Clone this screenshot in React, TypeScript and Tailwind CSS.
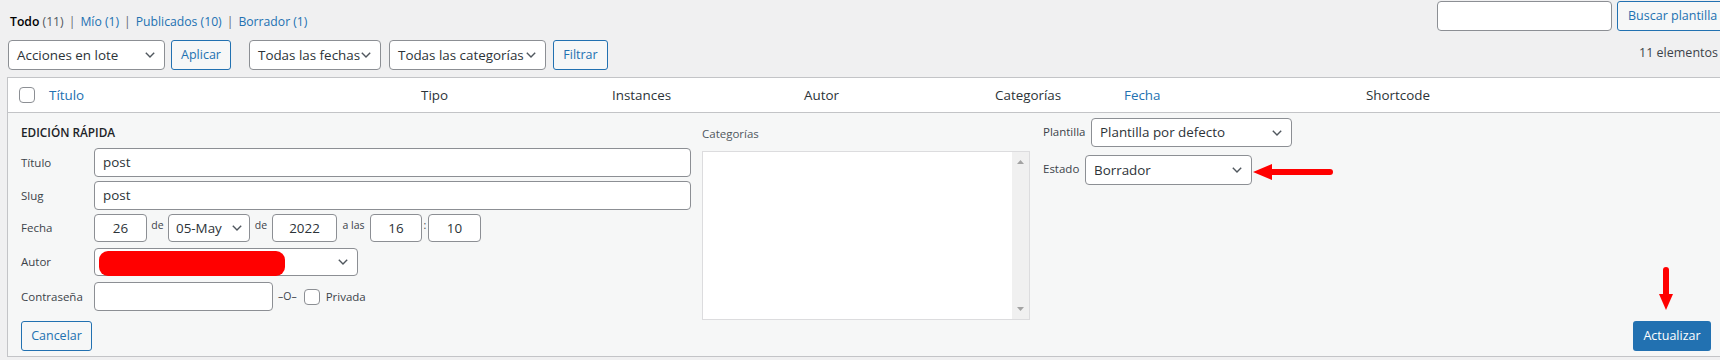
import React from "react";

// Edición rápida de una plantilla en la lista de WP (captura de pantalla).
const Chevron = () => (
  <svg width="10" height="6" viewBox="0 0 10 6" className="shrink-0">
    <path d="M0.8 0.8L5 5L9.2 0.8" fill="none" stroke="#50575e" strokeWidth="1.4" />
  </svg>
);

function Select({ className, text, children }: { className: string; text?: string; children?: React.ReactNode }) {
  return (
    <div
      className={`relative flex items-center justify-between rounded-[4px] border border-[#8c8f94] bg-white pl-[8px] pr-[9px] text-[13.4px] text-[#2c3338] ${className}`}
    >
      <span className="whitespace-nowrap">{text}</span>
      {children}
      <Chevron />
    </div>
  );
}

function Field({ className, text }: { className: string; text?: string }) {
  return (
    <div className={`flex items-center rounded-[4px] border border-[#8c8f94] bg-white text-[13.4px] text-[#2c3338] ${className}`}>
      {text}
    </div>
  );
}

const Box = ({ className = "" }: { className?: string }) => (
  <span className={`inline-block h-[16px] w-[16px] rounded-[4px] border border-[#8c8f94] bg-white ${className}`} />
);

const COLS = [
  { label: "Título", w: "w-[372px]", link: true },
  { label: "Tipo", w: "w-[191px]" },
  { label: "Instances", w: "w-[192px]" },
  { label: "Autor", w: "w-[191px]" },
  { label: "Categorías", w: "w-[129px]" },
  { label: "Fecha", w: "w-[242px]", link: true },
  { label: "Shortcode", w: "w-[200px]" },
];

export default function App() {
  return (
    <div className="relative h-[360px] w-[1720px] overflow-hidden bg-[#f0f0f1] font-['Open_Sans','Noto_Sans',sans-serif] text-[#3c434a]">
      <div className="w-[1724px] pl-[7px] pt-[1px]">
        {/* estados + buscador */}
        <div className="flex h-[30px] items-start justify-between">
          <div className="ml-[3px] mt-[12px] whitespace-nowrap text-[12.2px] leading-[18px] text-[#646970]">
            <span className="font-semibold text-black">Todo</span> <span className="text-[#50575e]">(11)</span>
            <span className="mx-[5px]">|</span>
            <span className="text-[#2271b1]">Mío (1)</span>
            <span className="mx-[5px]">|</span>
            <span className="text-[#2271b1]">Publicados (10)</span>
            <span className="mx-[5px]">|</span>
            <span className="text-[#2271b1]">Borrador (1)</span>
          </div>
          <div className="flex gap-[5px]">
            <div className="h-[30px] w-[175px] rounded-[4px] border border-[#8c8f94] bg-white" />
            <div className="flex h-[30px] w-[107px] items-center rounded-[3px] border border-[#2271b1] bg-[#f6f7f7] pl-[10px] text-[12.5px] text-[#2271b1]">
              Buscar plantilla
            </div>
          </div>
        </div>

        {/* acciones */}
        <div className="mt-[9px] flex h-[30px] items-center">
          <Select className="ml-[1px] h-[30px] w-[157px]" text="Acciones en lote" />
          <div className="ml-[6px] flex h-[30px] w-[60px] items-center justify-center rounded-[3px] border border-[#2271b1] bg-[#f6f7f7] text-[12.5px] text-[#2271b1]">
            Aplicar
          </div>
          <Select className="ml-[18px] h-[30px] w-[132px]" text="Todas las fechas" />
          <Select className="ml-[8px] h-[30px] w-[157px]" text="Todas las categorías" />
          <div className="ml-[7px] flex h-[30px] w-[55px] items-center justify-center rounded-[3px] border border-[#2271b1] bg-[#f6f7f7] text-[12.5px] text-[#2271b1]">
            Filtrar
          </div>
          <span className="ml-auto mr-[6px] mb-[3px] text-[12.5px] text-[#3c434a]">11 elementos</span>
        </div>

        {/* tabla */}
        <div className="mt-[7px] border border-[#c3c4c7] bg-white">
          <div className="flex h-[35px] items-center border-b border-[#c3c4c7] text-[13.4px] text-[#2c3338]">
            <div className="flex w-[41px] pl-[11px]">
              <Box />
            </div>
            {COLS.map((c) => (
              <div key={c.label} className={`${c.w} shrink-0 whitespace-nowrap ${c.link ? "text-[#2271b1]" : ""}`}>
                {c.label}
              </div>
            ))}
          </div>

          {/* edición rápida */}
          <div className="bg-[#f6f7f7] pb-[5px] pl-[13px] pr-[12px] pt-[5px]">
            <div className="flex items-start">
              {/* columna izquierda */}
              <div className="mt-[6px] w-[670px] text-[11.5px] text-[#3c434a]">
                <div className="h-[16px] text-[11.8px] font-semibold uppercase leading-[16px] text-[#1d2327]">Edición rápida</div>
                <div className="mt-[8px] flex h-[29px] items-center">
                  <span className="w-[73px]">Título</span>
                  <Field className="h-[29px] flex-1 pl-[8px]" text="post" />
                </div>
                <div className="mt-[4px] flex h-[29px] items-center">
                  <span className="w-[73px]">Slug</span>
                  <Field className="h-[29px] flex-1 pl-[8px]" text="post" />
                </div>
                <div className="mt-[4px] flex h-[28px] items-center">
                  <span className="w-[73px]">Fecha</span>
                  <Field className="h-[28px] w-[53px] justify-center" text="26" />
                  <span className="w-[21px] self-start pt-[4px] text-center text-[10.5px]">de</span>
                  <Select className="h-[28px] w-[82px] !pl-[7px] !pr-[7px]" text="05-May" />
                  <span className="w-[22px] self-start pt-[4px] text-center text-[10.5px]">de</span>
                  <Field className="h-[28px] w-[65px] justify-center" text="2022" />
                  <span className="w-[33px] self-start pt-[4px] text-center text-[10.5px]">a las</span>
                  <Field className="h-[28px] w-[52px] justify-center" text="16" />
                  <span className="w-[6px] self-start pt-[4px] text-center text-[10.5px]">:</span>
                  <Field className="h-[28px] w-[53px] justify-center" text="10" />
                </div>
                <div className="mt-[6px] flex h-[28px] items-center">
                  <span className="w-[73px]">Autor</span>
                  <Select className="h-[28px] w-[264px]">
                    <span className="absolute bottom-[-1px] left-[4px] h-[25px] w-[186px] rounded-[9px] bg-[#ff0000]" />
                  </Select>
                </div>
                <div className="mt-[6px] flex h-[29px] items-center">
                  <span className="w-[73px]">Contraseña</span>
                  <Field className="h-[29px] w-[179px]" />
                  <span className="ml-[5px] text-[10.5px]">–O–</span>
                  <Box className="ml-[7px]" />
                  <span className="ml-[6px]">Privada</span>
                </div>
              </div>

              {/* categorías */}
              <div className="ml-[11px] w-[328px]">
                <div className="mt-[8px] h-[16px] text-[11.5px] leading-[16px] text-[#50575e]">Categorías</div>
                <div className="mt-[9px] flex h-[169px] border border-[#dcdcde] bg-white">
                  <div className="flex-1" />
                  <div className="flex w-[17px] flex-col items-center justify-between bg-[#f0f0f0] py-[8px]">
                    <svg width="7" height="4" viewBox="0 0 7 4">
                      <path d="M0 4L3.5 0L7 4Z" fill="#a3a3a3" />
                    </svg>
                    <svg width="7" height="4" viewBox="0 0 7 4">
                      <path d="M0 0L3.5 4L7 0Z" fill="#a3a3a3" />
                    </svg>
                  </div>
                </div>
              </div>

              {/* plantilla / estado */}
              <div className="ml-[13px] text-[11.5px] text-[#3c434a]">
                <div className="flex h-[29px] items-center">
                  <span className="w-[48px] pb-[2px]">Plantilla</span>
                  <Select className="h-[29px] w-[201px]" text="Plantilla por defecto" />
                </div>
                <div className="mt-[8px] flex h-[30px] items-center">
                  <span className="w-[42px] pb-[2px]">Estado</span>
                  <Select className="h-[30px] w-[167px]" text="Borrador" />
                </div>
              </div>
            </div>

            <div className="mt-[1px] flex items-center justify-between">
              <div className="ml-[0px] flex h-[30px] w-[71px] items-center justify-center rounded-[3px] border border-[#2271b1] bg-[#f6f7f7] text-[12.5px] text-[#2271b1]">
                Cancelar
              </div>
              <div className="flex h-[30px] w-[78px] items-center justify-center rounded-[3px] bg-[#2271b1] text-[12.5px] text-white">
                Actualizar
              </div>
            </div>
          </div>
        </div>
      </div>

      {/* flechas de anotación */}
      <svg className="absolute left-[1250px] top-[160px]" width="90" height="24" viewBox="0 0 90 24">
        <path d="M3 12L22 4V20Z" fill="#ff0000" />
        <path d="M20 12H80" stroke="#ff0000" strokeWidth="6" strokeLinecap="round" />
      </svg>
      <svg className="absolute left-[1654px] top-[264px]" width="24" height="50" viewBox="0 0 24 50">
        <path d="M12 6V32" stroke="#ff0000" strokeWidth="6" strokeLinecap="round" />
        <path d="M5 30H19L12 46Z" fill="#ff0000" />
      </svg>
    </div>
  );
}
